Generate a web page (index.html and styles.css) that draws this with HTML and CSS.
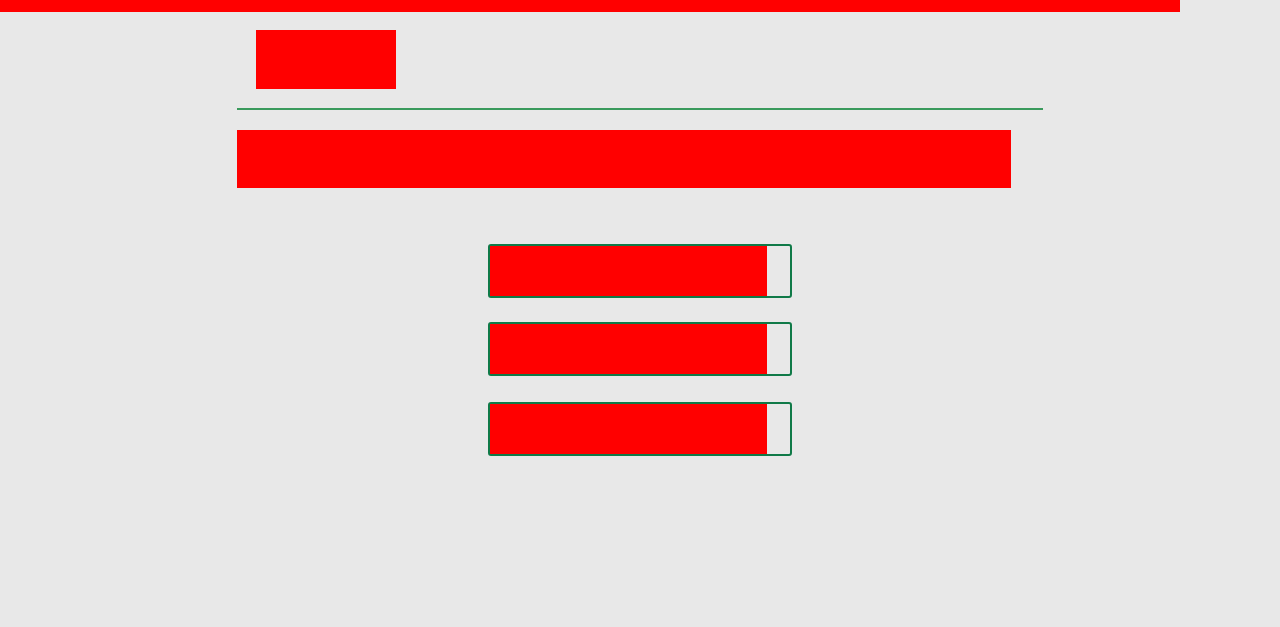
FILE: index.html
```html
<!DOCTYPE html>
<html lang="en">
<head>
<meta charset="utf-8">
<title>Page</title>
<link rel="stylesheet" href="styles.css">
</head>
<body>
<div class="topbar"></div>
<div class="container">
  <header class="header">
    <div class="logo"></div>
  </header>
  <div class="banner"></div>
  <div class="buttons">
    <div class="btn"><div class="btn-fill"></div></div>
    <div class="btn"><div class="btn-fill"></div></div>
    <div class="btn btn-last"><div class="btn-fill"></div></div>
  </div>
</div>
</body>
</html>
```
FILE: styles.css
```css
html, body {
  margin: 0;
  padding: 0;
}
body {
  background: #e8e8e8;
  font-family: "Liberation Sans", Arial, sans-serif;
  min-height: 627px;
}
.topbar {
  width: 1180px;
  height: 12px;
  background: #ff0000;
}
.container {
  width: 806px;
  margin: 0 auto;
}
.header {
  padding: 18px 19px 19px;
  border-bottom: 2px solid #3a9a5c;
}
.logo {
  width: 140px;
  height: 59px;
  background: #ff0000;
}
.banner {
  margin-top: 20px;
  width: 774px;
  height: 58px;
  background: #ff0000;
}
.buttons {
  margin-top: 56px;
  display: flex;
  flex-direction: column;
  align-items: center;
  gap: 24px;
}
.btn {
  box-sizing: border-box;
  width: 304px;
  height: 54px;
  border: 2px solid #107a48;
  border-radius: 3px;
  display: flex;
}
.btn-last {
  margin-top: 2px;
}
.btn-fill {
  width: 277px;
  height: 100%;
  background: #ff0000;
}
```
